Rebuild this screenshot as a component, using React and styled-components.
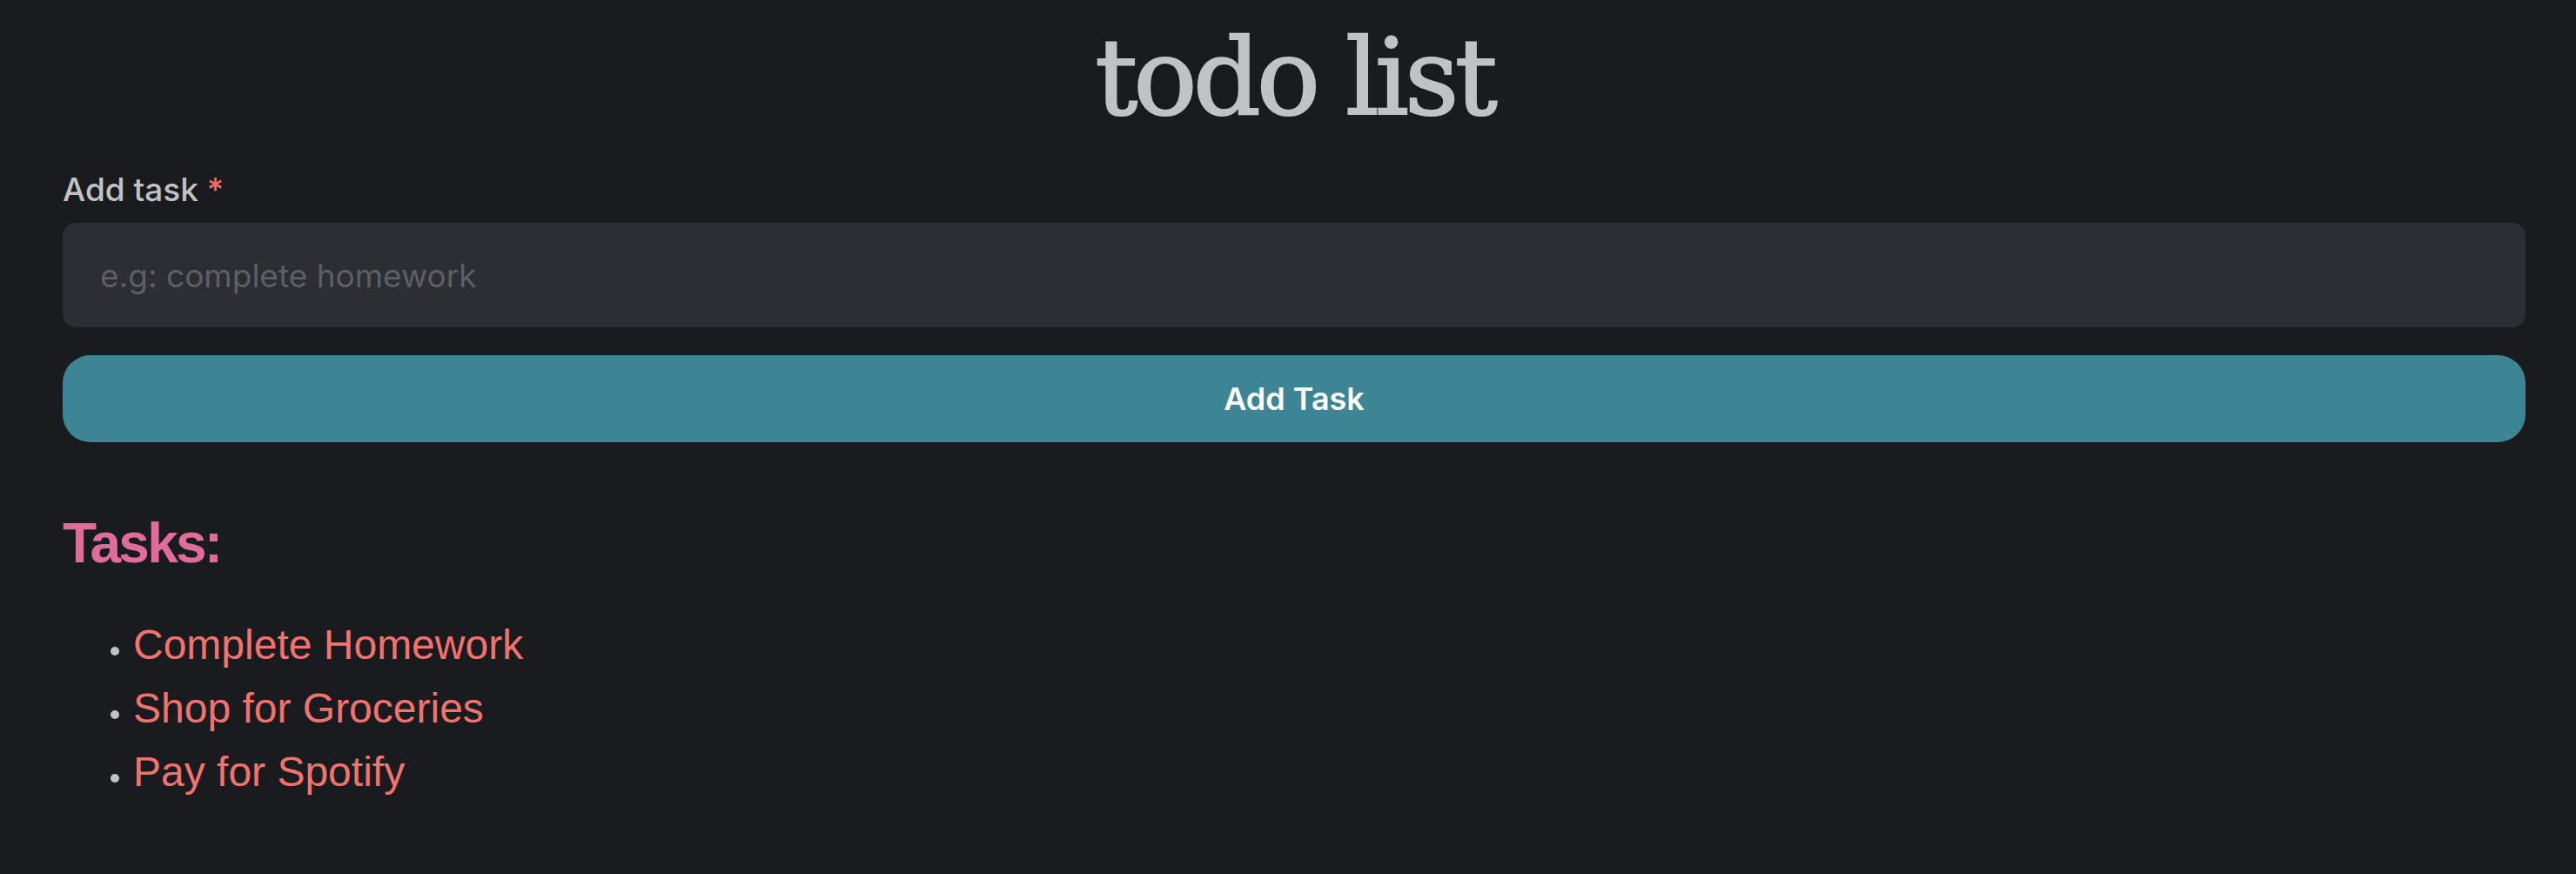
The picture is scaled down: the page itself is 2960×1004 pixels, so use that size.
import React from "react";
import styled, { createGlobalStyle } from "styled-components";

const Global = createGlobalStyle`
  html, body { margin: 0; padding: 0; background: #1a1b1e; }
  body { font-family: Inter, "Noto Sans", sans-serif; }
  * { box-sizing: border-box; }
`;

const Page = styled.main`
  min-height: 1004px;
  background: #1a1b1e;
  padding: 0 58px 40px 72px;
  display: flex;
  flex-direction: column;
`;

const Title = styled.h1`
  margin: 0;
  padding-top: 15px;
  text-align: center;
  font-family: "DejaVu Serif", "Liberation Serif", serif;
  font-weight: 400;
  font-size: 122px;
  line-height: 148px;
  letter-spacing: -5px;
  -webkit-text-stroke: 2px #c1c2c5;
  color: #c1c2c5;
`;

const Field = styled.div`
  display: flex;
  flex-direction: column;
  gap: 16px;
  margin-top: 33px;
`;

const Label = styled.label`
  font-family: Inter, sans-serif;
  font-size: 37px;
  font-weight: 500;
  line-height: 44px;
  color: #c1c2c5;
`;

const Required = styled.span`
  color: #f26b6b;
`;

const Input = styled.input`
  height: 120px;
  border: none;
  border-radius: 15px;
  background: #2c2e33;
  padding: 0 43px;
  font-family: Inter, sans-serif;
  font-size: 37px;
  color: #c1c2c5;
  outline: none;
  &::placeholder { color: #5c5f66; }
`;

const Button = styled.button`
  margin-top: 32px;
  height: 100px;
  border: none;
  border-radius: 32px;
  background: #3d8494;
  color: #ffffff;
  font-family: Inter, sans-serif;
  font-size: 36px;
  font-weight: 600;
`;

const Heading = styled.h2`
  margin: 76px 0 0;
  font-family: "Liberation Sans", Arial, sans-serif;
  font-weight: 700;
  font-size: 64px;
  line-height: 80px;
  letter-spacing: -2.8px;
  color: #e06c9b;
`;

const List = styled.ul`
  margin: 40px 0 0;
  padding-left: 81px;
`;

const Item = styled.li`
  font-family: "Liberation Sans", Arial, sans-serif;
  font-size: 48px;
  line-height: 73px;
  color: #f07370;
  &::marker {
    color: #c1c2c5;
    font-size: 32px;
  }
`;

const tasks = ["Complete Homework", "Shop for Groceries", "Pay for Spotify"];

export default function App() {
  return (
    <>
      <Global />
      <Page>
        <Title>todo list</Title>
        <Field>
          <Label>
            Add task<Required> *</Required>
          </Label>
          <Input placeholder="e.g: complete homework" />
        </Field>
        <Button>Add Task</Button>
        <Heading>Tasks:</Heading>
        <List>
          {tasks.map((t) => (
            <Item key={t}>{t}</Item>
          ))}
        </List>
      </Page>
    </>
  );
}
